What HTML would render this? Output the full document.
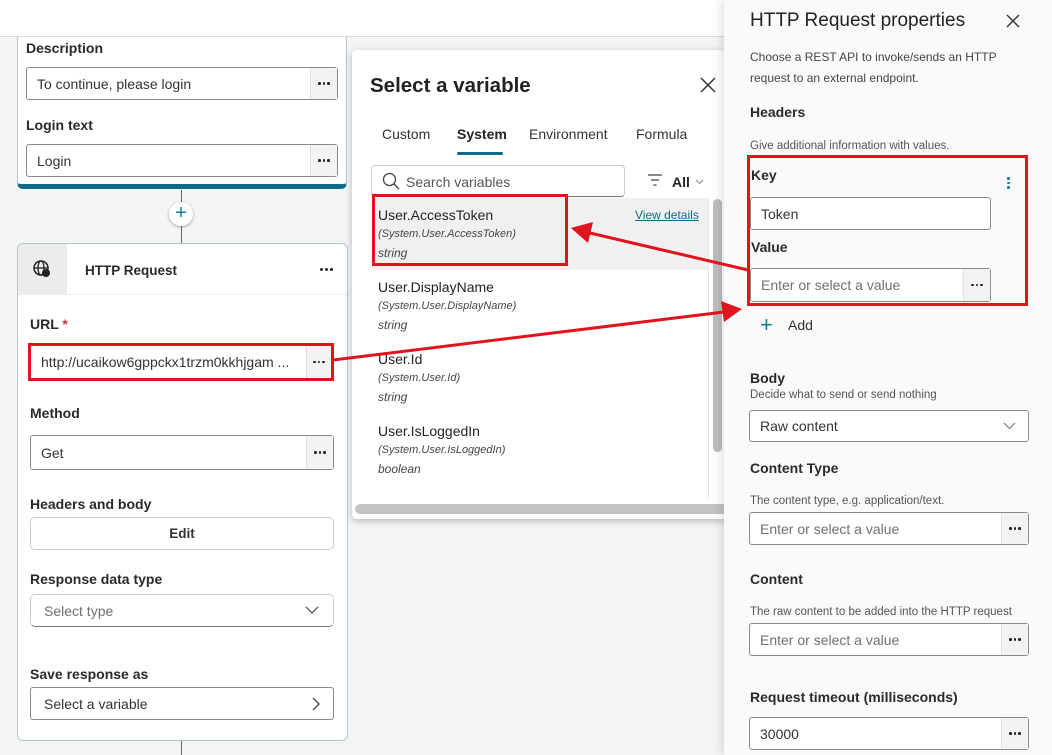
<!DOCTYPE html>
<html><head><meta charset="utf-8"><style>
*{box-sizing:border-box;margin:0;padding:0}
body{width:1052px;height:755px;overflow:hidden;background:#f4f5f7;font-family:"Liberation Sans",sans-serif;color:#242424;position:relative}
.a{position:absolute}
.lbl{position:absolute;font-size:14px;font-weight:bold;color:#2a2a2a}
.inp{position:absolute;background:#fff;border:1px solid #8a8a8a;border-radius:3px;font-size:14px;color:#333;padding-left:10px;display:flex;align-items:center}
.ph{color:#707070}
.dots{position:absolute;right:0;top:0;bottom:0;width:27px;background:#f3f3f3;border-left:1px solid #e0e0e0;display:flex;align-items:center;justify-content:center;gap:2px}
.dots i{display:block;width:2.5px;height:2.5px;background:#222;border-radius:50%}
.small{position:absolute;font-size:11.5px;color:#555}
.it{position:absolute;left:378px}
.it .n{font-size:14px;color:#242424}
.it .s{font-size:11px;font-style:italic;color:#444;margin-top:5px}
.it .t{font-size:12px;font-style:italic;color:#444;margin-top:6px}
</style></head><body>
<div class="a" style="left:0;top:0;width:724px;height:37px;background:#fff;border-bottom:1px solid #ddd"></div>
<div class="a" style="left:17px;top:37px;width:330px;height:152px;background:#fff;border:1px solid #b8c4cc;border-top:none;border-bottom:5px solid #0f6a8a;border-radius:0 0 6px 6px"></div>
<div class="lbl" style="left:26px;top:40px">Description</div>
<div class="inp" style="left:26px;top:67px;width:312px;height:33px">To continue, please login<div class="dots"><i></i><i></i><i></i></div></div>
<div class="lbl" style="left:26px;top:117px">Login text</div>
<div class="inp" style="left:26px;top:144px;width:312px;height:33px">Login<div class="dots"><i></i><i></i><i></i></div></div>
<div class="a" style="left:181px;top:190px;width:1px;height:53px;background:#666"></div>
<div class="a" style="left:169px;top:202px;width:24px;height:24px;border-radius:50%;background:#fff;box-shadow:0 1px 3px rgba(0,0,0,.35);color:#0f7a9a;font-size:20px;line-height:23px;text-align:center">+</div>
<div class="a" style="left:181px;top:740px;width:1px;height:15px;background:#666"></div>
<div class="a" style="left:17px;top:243px;width:331px;height:498px;background:#fff;border:1px solid #b8c4cc;border-radius:6px;overflow:hidden">
<div class="a" style="left:0;top:0;width:49px;height:50px;background:#ececec"></div>
<div class="a" style="left:0;top:50px;width:331px;height:1px;background:#eee"></div>
</div>
<svg class="a" style="left:32px;top:259px" width="20" height="20" viewBox="0 0 20 20"><circle cx="9" cy="9" r="7" fill="none" stroke="#222" stroke-width="1.5"/><ellipse cx="9" cy="9" rx="3" ry="7" fill="none" stroke="#222" stroke-width="1.3"/><line x1="2" y1="9" x2="16" y2="9" stroke="#222" stroke-width="1.3"/><circle cx="14" cy="14" r="4" fill="#222"/></svg>
<div class="lbl" style="left:85px;top:263px;font-size:13.5px">HTTP Request</div>
<div class="a" style="left:320px;top:268px;display:flex;gap:2px"><i style="width:3px;height:3px;background:#222;border-radius:50%"></i><i style="width:3px;height:3px;background:#222;border-radius:50%"></i><i style="width:3px;height:3px;background:#222;border-radius:50%"></i></div>
<div class="lbl" style="left:30px;top:316px">URL <span style="color:#c4314b">*</span></div>
<div class="inp" style="left:28px;top:343px;width:306px;height:38px;border:3px solid #e0141e;border-radius:0">http://ucaikow6gppckx1trzm0kkhjgam ...<div class="dots" style="width:25px"><i></i><i></i><i></i></div></div>
<div class="lbl" style="left:30px;top:405px">Method</div>
<div class="inp" style="left:30px;top:435px;width:304px;height:35px">Get<div class="dots"><i></i><i></i><i></i></div></div>
<div class="lbl" style="left:30px;top:496px">Headers and body</div>
<div class="inp" style="left:30px;top:517px;width:304px;height:33px;justify-content:center;padding:0;border-color:#ccc;border-radius:5px;font-weight:bold;font-size:13.5px">Edit</div>
<div class="lbl" style="left:30px;top:571px">Response data type</div>
<div class="inp ph" style="left:30px;top:594px;width:304px;height:33px;border-color:#ccc;border-bottom-color:#777;border-radius:5px;padding-left:13px">Select type<svg class="a" style="right:14px;top:11px" width="14" height="9"><path d="M1 1 L7 7 L13 1" fill="none" stroke="#555" stroke-width="1.3"/></svg></div>
<div class="lbl" style="left:30px;top:666px">Save response as</div>
<div class="inp" style="left:30px;top:687px;width:304px;height:33px;padding-left:13px">Select a variable<svg class="a" style="right:12px;top:9px" width="9" height="14"><path d="M1 1 L7 7 L1 13" fill="none" stroke="#444" stroke-width="1.3"/></svg></div>

<div class="a" style="left:352px;top:50px;width:376px;height:469px;background:#fff;box-shadow:0 2px 8px rgba(0,0,0,.25);border-radius:4px"></div>
<div class="a" style="left:370px;top:74px;font-size:20.5px;font-weight:bold;color:#222">Select a variable</div>
<svg class="a" style="left:700px;top:77px" width="16" height="16"><path d="M1 1L15 15M15 1L1 15" stroke="#333" stroke-width="1.5"/></svg>
<div class="a" style="left:382px;top:126px;font-size:14px;color:#333">Custom</div>
<div class="a" style="left:457px;top:126px;font-size:14px;font-weight:bold;color:#222">System</div>
<div class="a" style="left:457px;top:152px;width:46px;height:3px;background:#0f6a8a;border-radius:2px"></div>
<div class="a" style="left:529px;top:126px;font-size:14px;color:#333">Environment</div>
<div class="a" style="left:636px;top:126px;font-size:14px;color:#333">Formula</div>
<div class="a" style="left:371px;top:165px;width:254px;height:32px;border:1px solid #ccc;border-bottom-color:#777;border-radius:4px"></div>
<svg class="a" style="left:382px;top:172px" width="18" height="18"><circle cx="7.5" cy="7.5" r="6" fill="none" stroke="#444" stroke-width="1.3"/><path d="M12 12L17 17" stroke="#444" stroke-width="1.3"/></svg>
<div class="a" style="left:406px;top:174px;font-size:14px;color:#555">Search variables</div>
<svg class="a" style="left:647px;top:174px" width="16" height="12"><path d="M1 1H15M4 6H12M6.5 11H9.5" stroke="#444" stroke-width="1.3"/></svg>
<div class="a" style="left:672px;top:174px;font-size:14px;font-weight:bold">All</div>
<svg class="a" style="left:695px;top:179px" width="9" height="6"><path d="M1 1L4.5 4.5L8 1" fill="none" stroke="#888" stroke-width="1"/></svg>
<div class="a" style="left:372px;top:198px;width:336px;height:72px;background:#f0f0f0"></div>
<div class="it" style="top:207px"><div class="n">User.AccessToken</div><div class="s">(System.User.AccessToken)</div><div class="t">string</div></div>
<div class="a" style="left:635px;top:208px;font-size:12px;color:#0f6a8a;text-decoration:underline">View details</div>
<div class="it" style="top:279px"><div class="n">User.DisplayName</div><div class="s">(System.User.DisplayName)</div><div class="t">string</div></div>
<div class="it" style="top:351px"><div class="n">User.Id</div><div class="s">(System.User.Id)</div><div class="t">string</div></div>
<div class="it" style="top:423px"><div class="n">User.IsLoggedIn</div><div class="s">(System.User.IsLoggedIn)</div><div class="t">boolean</div></div>
<div class="a" style="left:708px;top:198px;width:1px;height:300px;background:#e5e5e5"></div>
<div class="a" style="left:713px;top:199px;width:9px;height:253px;background:#bdbdbd;border-radius:5px"></div>
<div class="a" style="left:355px;top:504px;width:372px;height:10px;background:#c4c4c4;border-radius:5px"></div>
<div class="a" style="left:372px;top:194px;width:196px;height:72px;border:3px solid #e0141e"></div>

<div class="a" style="left:724px;top:0;width:328px;height:755px;background:#fafafa;box-shadow:-4px 0 8px rgba(0,0,0,.1)"></div>
<div class="a" style="left:750px;top:10px;font-size:19px;color:#222">HTTP Request properties</div>
<svg class="a" style="left:1006px;top:14px" width="14" height="14"><path d="M1 1L13 13M13 1L1 13" stroke="#333" stroke-width="1.4"/></svg>
<div class="small" style="left:750px;top:47px;line-height:21px;color:#444;font-size:12px">Choose a REST API to invoke/sends an HTTP<br>request to an external endpoint.</div>
<div class="lbl" style="left:750px;top:104px">Headers</div>
<div class="small" style="left:750px;top:140px">Give additional information with values.</div>
<div class="lbl" style="left:751px;top:167px">Key</div>
<div class="a" style="left:1007px;top:177px;display:flex;flex-direction:column;gap:2px"><i style="width:2.5px;height:2.5px;background:#0f7a9a;border-radius:50%"></i><i style="width:2.5px;height:2.5px;background:#0f7a9a;border-radius:50%"></i><i style="width:2.5px;height:2.5px;background:#0f7a9a;border-radius:50%"></i></div>
<div class="inp" style="left:750px;top:197px;width:241px;height:33px">Token</div>
<div class="lbl" style="left:751px;top:239px">Value</div>
<div class="inp ph" style="left:750px;top:268px;width:241px;height:34px">Enter or select a value<div class="dots"><i></i><i></i><i></i></div></div>
<div class="a" style="left:747px;top:155px;width:281px;height:151px;border:3px solid #e0141e"></div>
<div class="a" style="left:760px;top:312px;font-size:22px;color:#0f7a9a">+</div>
<div class="a" style="left:788px;top:317px;font-size:14px;color:#333">Add</div>
<div class="lbl" style="left:750px;top:370px">Body</div>
<div class="small" style="left:750px;top:389px">Decide what to send or send nothing</div>
<div class="inp" style="left:749px;top:410px;width:280px;height:32px">Raw content<svg class="a" style="right:12px;top:11px" width="13" height="8"><path d="M1 1L6.5 6.5L12 1" fill="none" stroke="#777" stroke-width="1.1"/></svg></div>
<div class="lbl" style="left:750px;top:460px">Content Type</div>
<div class="small" style="left:750px;top:495px">The content type, e.g. application/text.</div>
<div class="inp ph" style="left:749px;top:512px;width:280px;height:33px">Enter or select a value<div class="dots"><i></i><i></i><i></i></div></div>
<div class="lbl" style="left:750px;top:571px">Content</div>
<div class="small" style="left:750px;top:606px">The raw content to be added into the HTTP request</div>
<div class="inp ph" style="left:749px;top:623px;width:280px;height:33px">Enter or select a value<div class="dots"><i></i><i></i><i></i></div></div>
<div class="lbl" style="left:750px;top:689px">Request timeout (milliseconds)</div>
<div class="inp" style="left:749px;top:717px;width:280px;height:33px">30000<div class="dots"><i></i><i></i><i></i></div></div>

<svg class="a" style="left:0;top:0" width="1052" height="755">
<line x1="333" y1="360" x2="724" y2="312" stroke="#e0141e" stroke-width="3"/>
<polygon points="742,309 721,301 724,322" fill="#e0141e"/>
<line x1="748" y1="270" x2="590" y2="233" stroke="#e0141e" stroke-width="3"/>
<polygon points="571,228 593,222 588,243" fill="#e0141e"/>
</svg>
</body></html>
